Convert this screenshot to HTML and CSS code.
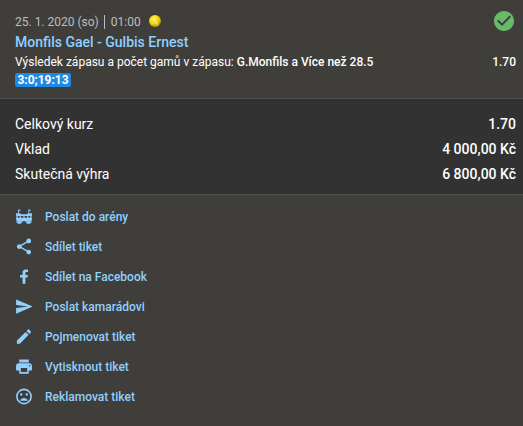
FILE: index.html
```html
<!DOCTYPE html>
<html lang="cs">

<head>
  <meta charset="UTF-8">
  <meta name="viewport" content="width=device-width, initial-scale=1.0">
  <title>Tiket</title>
  <link rel="stylesheet" href="styles.css">
</head>

<body>
  <div class="match">
    <div class="matchInfo">
      <div class="date">
        <span class="day">25. 1. 2020 (so)</span>
        <span class="time">01:00</span>
        <svg class="ball" viewBox="0 0 12 12">
          <defs>
            <radialGradient id="ballColor" cx="0.4" cy="0.35" r="0.65">
              <stop offset="0" stop-color="#fff33a" />
              <stop offset="0.6" stop-color="#f2d411" />
              <stop offset="1" stop-color="#b58a0a" />
            </radialGradient>
          </defs>
          <circle cx="6" cy="6" r="6" fill="url(#ballColor)" />
          <path d="M6.2 1.6C4.9 4 5.3 6 7 7.2c1 .8 1.300 1.800 1 3.200" fill="none" stroke="#fff9b0" stroke-width="0.8" />
        </svg>
      </div>
      <a class="players">Monfils Gael - Gulbis Ernest</a>
      <div class="bet">Výsledek zápasu a počet gamů v zápasu: <b>G.Monfils a Více než 28.5</b></div>
      <span class="score">3:0;19:13</span>
    </div>
    <div class="matchResult">
      <svg class="check" viewBox="0 0 24 24">
        <path d="M12 2C6.480 2 2 6.480 2 12s4.480 10 10 10 10-4.480 10-10S17.520 2 12 2zm-2 15l-5-5 1.410-1.410L10 14.170l7.590-7.590L19 8l-9 9z" />
      </svg>
      <b class="odds">1.70</b>
    </div>
  </div>

  <div class="summary">
    <div class="row"><span>Celkový kurz</span><b>1.70</b></div>
    <div class="row"><span>Vklad</span><b>4 000,00 Kč</b></div>
    <div class="row"><span>Skutečná výhra</span><b>6 800,00 Kč</b></div>
  </div>

  <div class="actions">
    <a class="action">
      <svg class="icon" viewBox="0 0 24 24">
        <path d="M4.500 3h1l2.700 1.200-2.700 1.300V8h-1zM17.500 3h1l2.700 1.200-2.700 1.300V8h-1z" />
        <path d="M2 8h5l1.500 1h7L17 8h5v3.500H2z" />
        <path d="M2.500 11.500h1.700v2.500H2.500zM6.500 11.500h1.600v2.500H6.500zM11.200 11.500h1.600v2.500h-1.600zM15.900 11.500h1.600v2.500h-1.600zM19.800 11.500h1.700v2.500h-1.700z" />
        <path d="M2 13.500h20V17l-3 1H5l-3-1z" />
        <path d="M2.500 18h7.500v1l-2 2H4.500l-2-1.500zM14 18h7.500v1.500l-2 1.500H16l-2-2z" />
      </svg>
      <span>Poslat do arény</span>
    </a>
    <a class="action">
      <svg class="icon" viewBox="0 0 24 24">
        <path d="M18 16.080c-.76 0-1.440.3-1.960.77L8.910 12.700c.05-.23.09-.46.09-.7s-.04-.47-.09-.7l7.050-4.110c.54.5 1.250.81 2.040.81 1.660 0 3-1.340 3-3s-1.340-3-3-3-3 1.340-3 3c0 .24.040.47.090.7L8.040 9.810C7.500 9.310 6.790 9 6 9c-1.660 0-3 1.340-3 3s1.340 3 3 3c.79 0 1.500-.31 2.040-.81l7.120 4.160c-.05.21-.08.43-.08.65 0 1.610 1.310 2.920 2.920 2.920s2.920-1.310 2.920-2.920-1.310-2.920-2.920-2.920z" />
      </svg>
      <span>Sdílet tiket</span>
    </a>
    <a class="action">
      <svg class="icon" viewBox="0 0 24 24">
        <path d="M17 3v3.200h-2c-.8 0-1.200.5-1.200 1.300V10H17l-.5 3.200h-2.700V21h-3.600v-7.800H7V10h3.200V7c0-2.500 1.600-4 3.900-4H17z" />
      </svg>
      <span>Sdílet na Facebook</span>
    </a>
    <a class="action">
      <svg class="icon" viewBox="0 0 24 24">
        <path d="M2.010 21L23 12 2.010 3 2 10l15 2-15 2z" />
      </svg>
      <span>Poslat kamarádovi</span>
    </a>
    <a class="action">
      <svg class="icon" viewBox="0 0 24 24">
        <path d="M3 17.250V21h3.750L17.810 9.940l-3.750-3.750L3 17.250zM20.710 7.040c.39-.39.39-1.020 0-1.410l-2.340-2.340c-.39-.39-1.020-.39-1.410 0l-1.830 1.830 3.750 3.750 1.830-1.830z" />
      </svg>
      <span>Pojmenovat tiket</span>
    </a>
    <a class="action">
      <svg class="icon" viewBox="0 0 24 24">
        <path d="M19 8H5c-1.660 0-3 1.340-3 3v6h4v4h12v-4h4v-6c0-1.660-1.340-3-3-3zm-3 11H8v-5h8v5zm3-7c-.55 0-1-.45-1-1s.45-1 1-1 1 .45 1 1-.45 1-1 1zm-1-9H6v4h12V3z" />
      </svg>
      <span>Vytisknout tiket</span>
    </a>
    <a class="action">
      <svg class="icon" viewBox="0 0 24 24">
        <path d="M12 2a10 10 0 1 0 0 20 10 10 0 0 0 0-20zm0 18a8 8 0 1 1 0-16 8 8 0 0 1 0 16zm3.500-9c.83 0 1.500-.67 1.500-1.500S16.330 8 15.500 8 14 8.670 14 9.500s.67 1.500 1.500 1.500zm-7 0c.83 0 1.500-.67 1.500-1.500S9.330 8 8.500 8 7 8.670 7 9.500 7.670 11 8.500 11zm3.500 3c-2.330 0-4.310 1.460-5.110 3.500h10.220c-.8-2.040-2.780-3.500-5.110-3.500z" />
      </svg>
      <span>Reklamovat tiket</span>
    </a>
  </div>
</body>

</html>
```
FILE: styles.css
```css
body {
  margin: 0;
  height: 426px;
  background: #403e3a;
  color: #fff;
  font-family: Roboto, sans-serif;
  font-size: 12px;
  overflow: hidden;
}

b {
  font-weight: 500;
}

.match {
  display: flex;
  justify-content: space-between;
  box-sizing: border-box;
  height: 99px;
  padding: 11px 7px 0 15px;
  border-bottom: 1px solid #50514f;
}

.date {
  display: flex;
  align-items: center;
  height: 21px;
  color: #bdbdbd;
}

.time {
  margin-left: 5px;
  padding-left: 6px;
  border-left: 1px solid #bdbdbd;
}

.ball {
  width: 12px;
  height: 12px;
  margin: 0 0 1px 8px;
}

.players {
  display: block;
  color: #90d0ff;
  font-size: 14px;
  font-weight: 500;
  line-height: 20px;
}

.bet {
  line-height: 20px;
}

.score {
  display: block;
  width: 56px;
  height: 14px;
  margin-top: 1px;
  border-radius: 2px;
  background: #1e88e5;
  font-weight: 700;
  line-height: 15px;
  text-align: center;
}

.matchResult {
  display: flex;
  flex-direction: column;
  align-items: flex-end;
}

.check {
  width: 24px;
  height: 24px;
  margin: -2px 0 19px;
  fill: #66bb6a;
}

.odds {
  line-height: 20px;
}

.summary {
  box-sizing: border-box;
  height: 96px;
  padding: 13px 7px 0 15px;
  border-bottom: 1px solid #50514f;
  background: #323232;
  font-size: 14px;
}

.row {
  display: flex;
  justify-content: space-between;
  line-height: 25px;
}

.actions {
  padding: 7px 0 0 14px;
}

.action {
  display: flex;
  align-items: center;
  height: 30px;
  color: #90d0ff;
  font-weight: 500;
}

.icon {
  width: 20px;
  height: 19px;
  margin: 0 11px 1px 0;
  fill: #90d0ff;
}
```
